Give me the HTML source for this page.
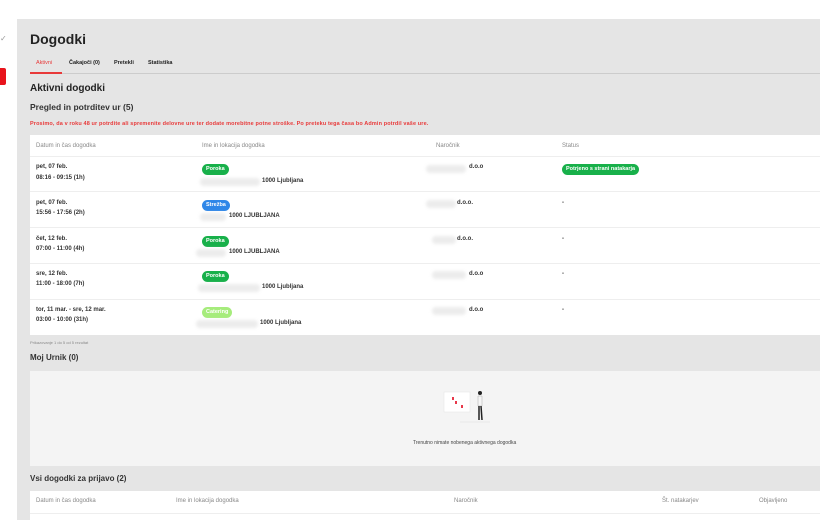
<!DOCTYPE html>
<html><head><meta charset="utf-8"><style>
*{margin:0;padding:0;box-sizing:border-box}
body{width:820px;height:520px;overflow:hidden;background:#fff;font-family:"Liberation Sans",sans-serif;color:#222;position:relative}
.panel{position:absolute;left:17px;top:19px;width:803px;height:501px;background:#e5e5e5}
.a{position:absolute;white-space:nowrap}
.tb{position:absolute;left:30px;width:790px;background:#fff}
.hd{font-size:6px;color:#888}
.b{font-size:6px;font-weight:bold;color:#333}
.pill{position:absolute;font-size:5.5px;font-weight:bold;color:#fff;border-radius:7px;padding:3px 4px;line-height:5px}
.blur{position:absolute;height:8px;background:#ececec;border-radius:4px;filter:blur(1.5px)}
.line{position:absolute;left:0;width:790px;height:1px;background:#eee}
</style></head><body>
<div class="a" style="left:0;top:34px;font-size:8px;color:#999">✓</div>
<div class="a" style="left:0;top:68px;width:6px;height:17px;background:#e8141c;border-radius:0 2px 2px 0"></div>
<div class="panel"></div>
<div class="a" style="left:30px;top:31px;font-size:14px;font-weight:bold;color:#222">Dogodki</div>
<div class="a" style="left:36px;top:60px;font-size:5.5px;color:#e83a3a">Aktivni</div>
<div class="a" style="left:69px;top:60px;font-size:5.5px;font-weight:bold">Čakajoči (0)</div>
<div class="a" style="left:114px;top:60px;font-size:5.5px;font-weight:bold">Pretekli</div>
<div class="a" style="left:148px;top:60px;font-size:5.5px;font-weight:bold">Statistika</div>
<div class="a" style="left:30px;top:73px;width:790px;height:1px;background:#ccc"></div>
<div class="a" style="left:30px;top:72px;width:32px;height:2px;background:#e83a3a"></div>
<div class="a" style="left:30px;top:83px;font-size:10px;font-weight:bold">Aktivni dogodki</div>
<div class="a" style="left:30px;top:102px;font-size:8.5px;font-weight:bold;color:#333">Pregled in potrditev ur (5)</div>
<div class="a" style="left:30px;top:121px;font-size:5.5px;font-weight:bold;color:#e83a3a;letter-spacing:0.13px">Prosimo, da v roku 48 ur potrdite ali spremenite delovne ure ter dodate morebitne potne stroške. Po preteku tega časa bo Admin potrdil vaše ure.</div>
<div class="tb" style="top:135px;height:200px">
<div class="a hd" style="left:6px;top:8px">Datum in čas dogodka</div>
<div class="a hd" style="left:172px;top:8px">Ime in lokacija dogodka</div>
<div class="a hd" style="left:406px;top:8px">Naročnik</div>
<div class="a hd" style="left:532px;top:8px">Status</div>
<div class="line" style="top:21px"></div>
<div class="line" style="top:56px"></div>
<div class="line" style="top:92px"></div>
<div class="line" style="top:128px"></div>
<div class="line" style="top:164px"></div>
</div>
<div class="a b" style="left:36px;top:164px">pet, 07 feb.</div><div class="a b" style="left:36px;top:175px">08:16 - 09:15 (1h)</div>
<div class="pill" style="left:202px;top:164px;background:#18b04a">Poroka</div>
<div class="blur" style="left:200px;top:178px;width:60px"></div><div class="a b" style="left:262px;top:178px">1000 Ljubljana</div>
<div class="blur" style="left:426px;top:165px;width:40px"></div><div class="a b" style="left:469px;top:164px">d.o.o</div>
<div class="pill" style="left:562px;top:164px;background:#18b04a">Potrjeno s strani natakarja</div>

<div class="a b" style="left:36px;top:200px">pet, 07 feb.</div><div class="a b" style="left:36px;top:210px">15:56 - 17:56 (2h)</div>
<div class="pill" style="left:202px;top:200px;background:#2f87e8">Strežba</div>
<div class="blur" style="left:200px;top:213px;width:26px"></div><div class="a b" style="left:229px;top:213px">1000 LJUBLJANA</div>
<div class="blur" style="left:426px;top:200px;width:30px"></div><div class="a b" style="left:457px;top:200px">d.o.o.</div>
<div class="a b" style="left:562px;top:200px">-</div>

<div class="a b" style="left:36px;top:236px">čet, 12 feb.</div><div class="a b" style="left:36px;top:246px">07:00 - 11:00 (4h)</div>
<div class="pill" style="left:202px;top:236px;background:#18b04a">Poroka</div>
<div class="blur" style="left:196px;top:249px;width:30px"></div><div class="a b" style="left:229px;top:249px">1000 LJUBLJANA</div>
<div class="blur" style="left:432px;top:236px;width:24px"></div><div class="a b" style="left:457px;top:236px">d.o.o.</div>
<div class="a b" style="left:562px;top:236px">-</div>

<div class="a b" style="left:36px;top:271px">sre, 12 feb.</div><div class="a b" style="left:36px;top:281px">11:00 - 18:00 (7h)</div>
<div class="pill" style="left:202px;top:271px;background:#18b04a">Poroka</div>
<div class="blur" style="left:198px;top:284px;width:62px"></div><div class="a b" style="left:262px;top:284px">1000 Ljubljana</div>
<div class="blur" style="left:432px;top:271px;width:34px"></div><div class="a b" style="left:469px;top:271px">d.o.o</div>
<div class="a b" style="left:562px;top:271px">-</div>

<div class="a b" style="left:36px;top:307px">tor, 11 mar. - sre, 12 mar.</div><div class="a b" style="left:36px;top:317px">03:00 - 10:00 (31h)</div>
<div class="pill" style="left:202px;top:307px;background:#a6ec7c">Catering</div>
<div class="blur" style="left:196px;top:320px;width:62px"></div><div class="a b" style="left:260px;top:320px">1000 Ljubljana</div>
<div class="blur" style="left:432px;top:307px;width:34px"></div><div class="a b" style="left:469px;top:307px">d.o.o</div>
<div class="a b" style="left:562px;top:307px">-</div>

<div class="a" style="left:30px;top:340px;font-size:4px;color:#888">Prikazovanje 1 do 5 od 5 rezultat</div>
<div class="a" style="left:30px;top:353px;font-size:8px;font-weight:bold;color:#333">Moj Urnik (0)</div>
<div class="a" style="left:30px;top:371px;width:790px;height:95px;background:#f4f4f4"></div>
<svg class="a" style="left:440px;top:388px" width="60" height="36" viewBox="0 0 60 36">
<rect x="4" y="4" width="26" height="20" fill="#fff" stroke="#e6e6e6" stroke-width="0.6"/>
<rect x="12" y="9" width="2" height="3" fill="#e8384a"/><rect x="15" y="13" width="2" height="3" fill="#e8384a"/><rect x="21" y="17" width="2" height="3" fill="#e8384a"/>
<circle cx="40" cy="5" r="2" fill="#222"/><path d="M38 8 L42 8 L42 18 L38 18Z" fill="#f5f5f5" stroke="#999" stroke-width="0.4"/>
<path d="M39 18 L39 32 M41 18 L42 32" stroke="#222" stroke-width="1.5"/>
<line x1="20" y1="34" x2="50" y2="34" stroke="#ddd" stroke-width="0.5"/>
</svg>
<div class="a" style="left:413px;top:440px;font-size:5px;color:#444">Trenutno nimate nobenega aktivnega dogodka</div>
<div class="a" style="left:30px;top:474px;font-size:8px;font-weight:bold;color:#333">Vsi dogodki za prijavo (2)</div>
<div class="tb" style="top:491px;height:29px">
<div class="a hd" style="left:6px;top:7px">Datum in čas dogodka</div>
<div class="a hd" style="left:146px;top:7px">Ime in lokacija dogodka</div>
<div class="a hd" style="left:424px;top:7px">Naročnik</div>
<div class="a hd" style="left:632px;top:7px">Št. natakarjev</div>
<div class="a hd" style="left:729px;top:7px">Objavljeno</div>
<div class="line" style="top:22px"></div>
</div>
</body></html>
